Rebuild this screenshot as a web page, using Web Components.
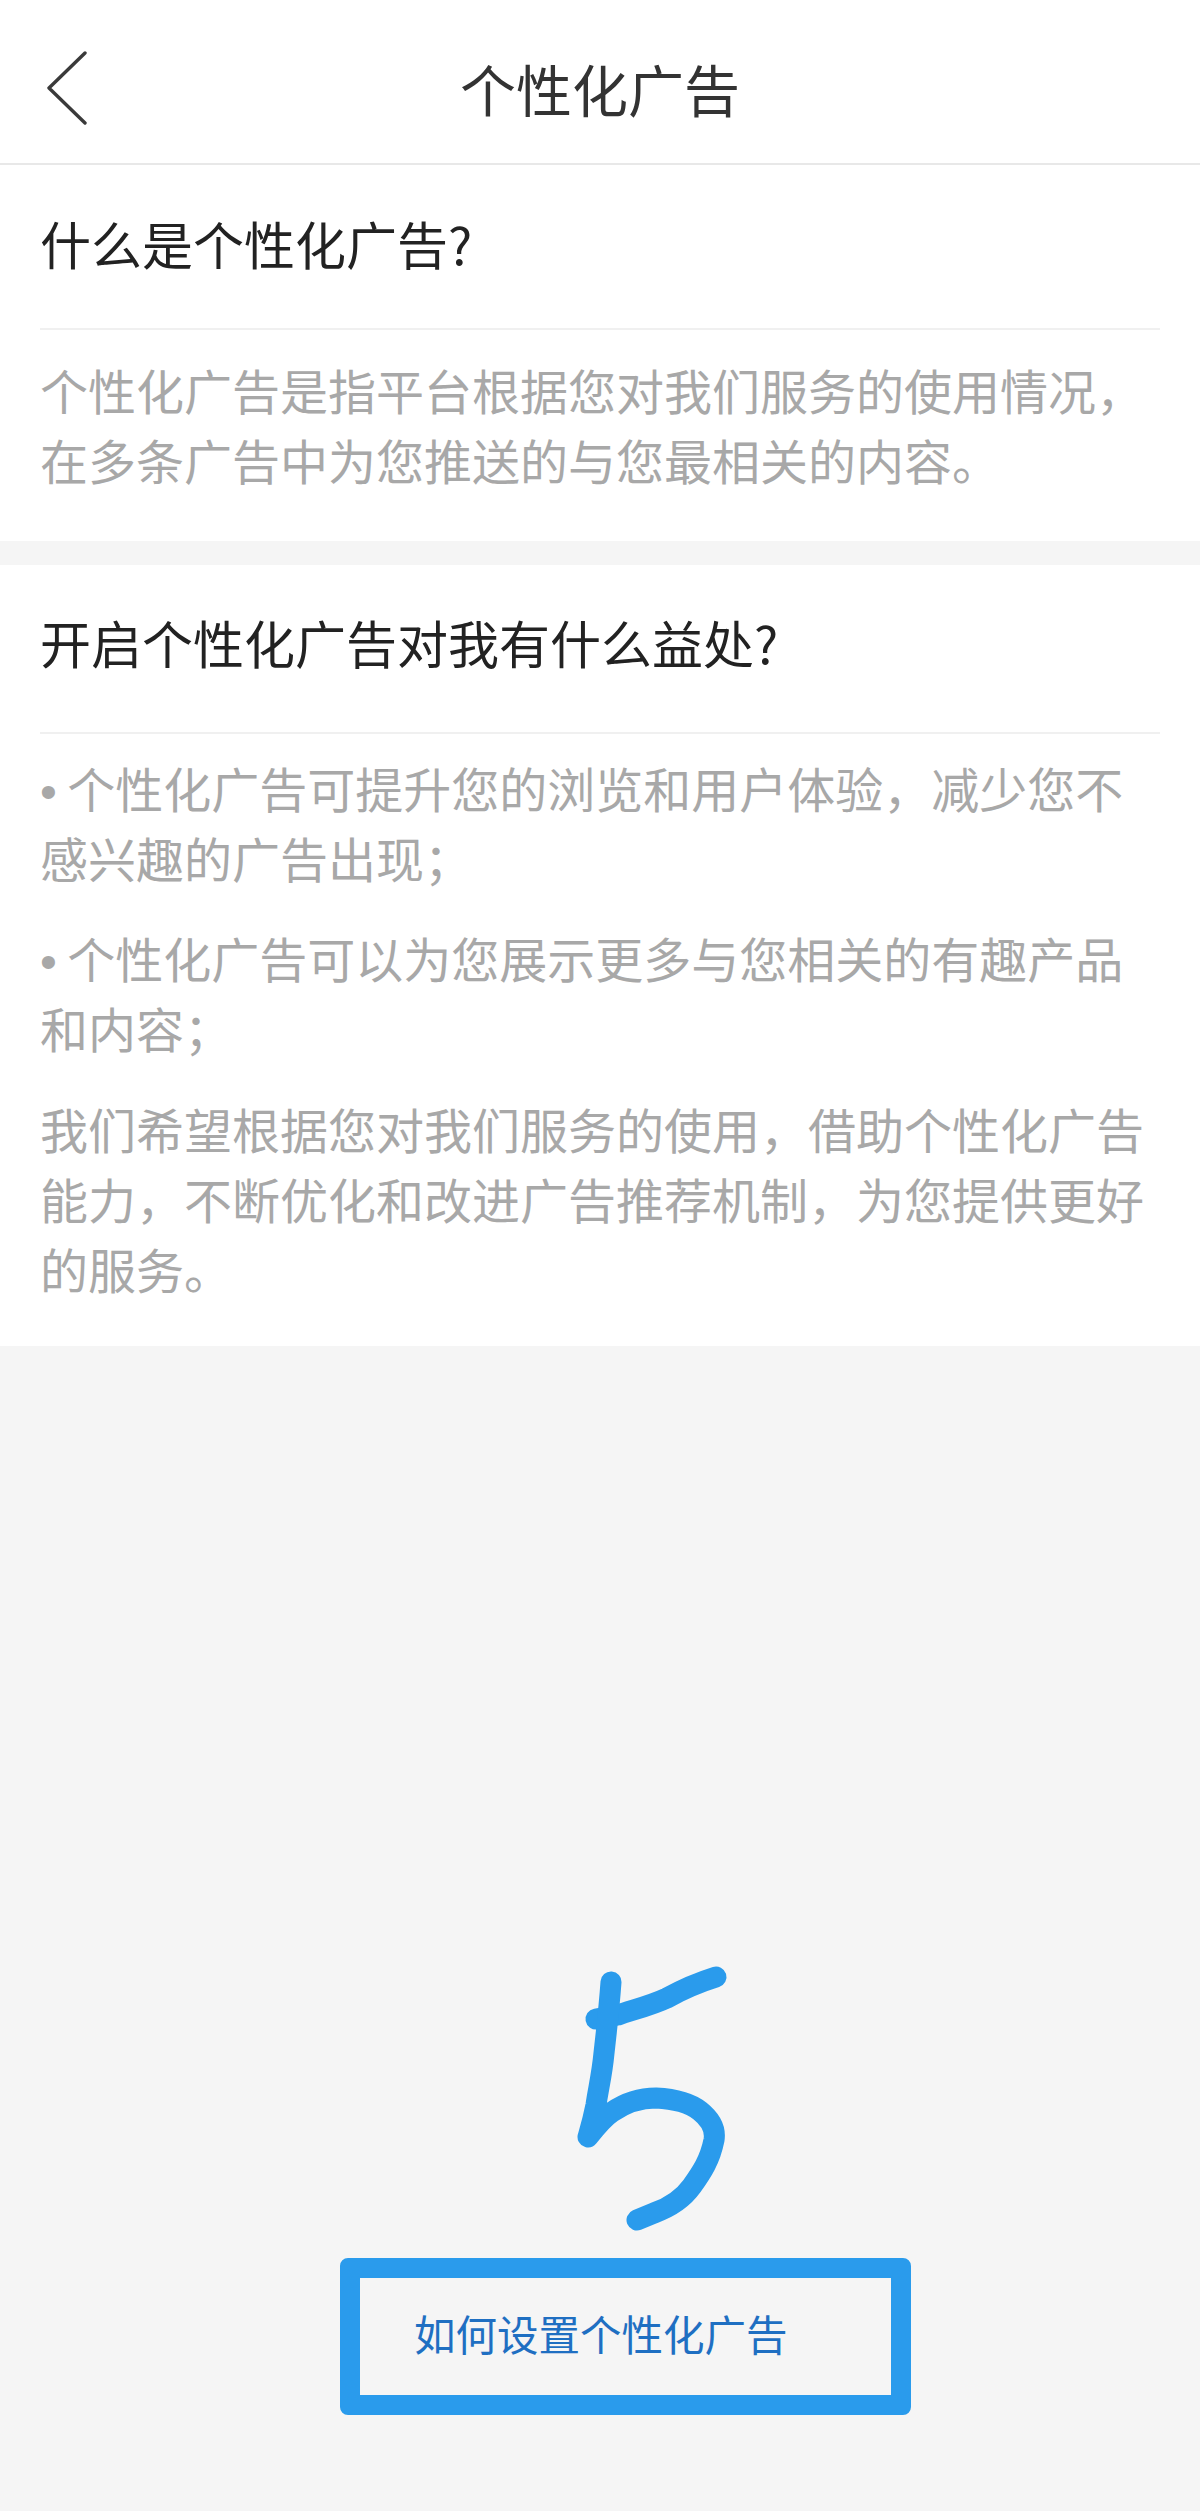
<!DOCTYPE html>
<html lang="zh">
<head>
<meta charset="utf-8">
<title>个性化广告</title>
<style>
  html, body { margin: 0; padding: 0; background: #f5f5f5; }
  body { font-family: "Noto Sans CJK SC", "Liberation Sans", sans-serif; }
  /* bullet comes from the latin font, the rest falls through to the CJK one */
  .item {
    font-family: "Liberation Sans", "Noto Sans CJK SC", sans-serif;
    word-spacing: -3px;
    padding-top: 4px;
    margin-bottom: 26px;
  }
</style>
</head>
<body>
<ad-page>
  <ad-header slot="top">个性化广告</ad-header>
  <ad-section slot="top" heading="什么是个性化广告?" head-height="163" head-bottom="6" body-top="24" body-bottom="47">
    <p>个性化广告是指平台根据您对我们服务的使用情况，在多条广告中为您推送的与您最相关的内容。</p>
  </ad-section>
  <ad-section slot="top" heading="开启个性化广告对我有什么益处?" head-height="167" head-bottom="12" body-top="19" body-bottom="43">
    <p class="item">• 个性化广告可提升您的浏览和用户体验，减少您不感兴趣的广告出现；</p>
    <p class="item">• 个性化广告可以为您展示更多与您相关的有趣产品和内容；</p>
    <p>我们希望根据您对我们服务的使用，借助个性化广告能力，不断优化和改进广告推荐机制，为您提供更好的服务。</p>
  </ad-section>
  <ad-link slot="bottom">如何设置个性化广告</ad-link>
</ad-page>

<script>
const pageTemplate = document.createElement('template');
pageTemplate.innerHTML = `
  <style>
    :host {
      display: flex;
      flex-direction: column;
      position: relative;
      height: 2511px;
      background: #f5f5f5;
      overflow: hidden;
    }
    .top { display: flex; flex-direction: column; gap: 24px; }
    .top ::slotted(ad-header) { margin-bottom: -24px; }
    .bottom {
      margin-top: auto;
      padding: 0 289px 96px 340px;
    }
    /* hand drawn annotation lying over the page */
    svg { position: absolute; left: 0; top: 0; pointer-events: none; }
    path { fill: none; stroke: #2a9bec; stroke-width: 21; stroke-linecap: round; stroke-linejoin: round; }
  </style>
  <div class="top"><slot name="top"></slot></div>
  <div class="bottom"><slot name="bottom"></slot></div>
  <svg width="1200" height="2511" viewBox="0 0 1200 2511">
    <path d="M716 1977C700 1982 685 1988 667 1998C650 2006 632 2010 618 2015L596 2019"/>
    <path d="M611 1982C609 2010 606 2035 604 2053C602 2075 598 2090 596 2105C593 2120 590 2130 588 2137C596 2127 603 2118 612 2112C625 2103 640 2098 656 2098C675 2099 690 2103 700 2111C710 2119 716 2128 714 2140C710 2160 702 2172 692 2186C682 2200 668 2208 654 2213L637 2220"/>
  </svg>
`;

class AdPage extends HTMLElement {
  constructor() {
    super();
    this.attachShadow({ mode: 'open' });
    this.shadowRoot.append(pageTemplate.content.cloneNode(true));
  }
}
customElements.define('ad-page', AdPage);

const headerTemplate = document.createElement('template');
headerTemplate.innerHTML = `
  <style>
    :host {
      display: flex;
      align-items: center;
      justify-content: center;
      position: relative;
      box-sizing: border-box;
      height: 165px;
      padding-top: 12px;
      background: #fff;
      border-bottom: 2px solid #e8e8e8;
      color: #333;
      font-size: 56px;
      line-height: 1;
    }
    .back { position: absolute; left: 47px; top: 51px; display: block; }
    .back path { fill: none; stroke: #3a3a3a; stroke-width: 3.4; stroke-linecap: round; stroke-linejoin: round; }
  </style>
  <svg class="back" width="40" height="74" viewBox="0 0 40 74">
    <path d="M38 2L2 37L38 72"/>
  </svg>
  <slot></slot>
`;

class AdHeader extends HTMLElement {
  constructor() {
    super();
    this.attachShadow({ mode: 'open' });
    this.shadowRoot.append(headerTemplate.content.cloneNode(true));
  }
}
customElements.define('ad-header', AdHeader);

const sectionTemplate = document.createElement('template');
sectionTemplate.innerHTML = `
  <style>
    :host {
      display: block;
      background: #fff;
      padding: 0 40px;
    }
    .head {
      display: flex;
      align-items: center;
      box-sizing: border-box;
      border-bottom: 2px solid #f0f0f0;
      color: #222;
      font-size: 51px;
      line-height: 1;
    }
    .body {
      color: #a8a8a8;
      font-size: 48px;
      line-height: 70px;
    }
    ::slotted(p) { margin: 0 0 30px; }
    ::slotted(p:last-child) { margin-bottom: 0; }
  </style>
  <div class="head"></div>
  <div class="body"><slot></slot></div>
`;

class AdSection extends HTMLElement {
  constructor() {
    super();
    this.attachShadow({ mode: 'open' });
    this.shadowRoot.append(sectionTemplate.content.cloneNode(true));
  }

  connectedCallback() {
    const head = this.shadowRoot.querySelector('.head');
    const body = this.shadowRoot.querySelector('.body');
    head.textContent = this.getAttribute('heading') || '';
    head.style.height = (Number(this.getAttribute('head-height')) + 2) + 'px';
    head.style.paddingBottom = this.getAttribute('head-bottom') + 'px';
    body.style.paddingTop = this.getAttribute('body-top') + 'px';
    body.style.paddingBottom = this.getAttribute('body-bottom') + 'px';
  }
}
customElements.define('ad-section', AdSection);

const linkTemplate = document.createElement('template');
linkTemplate.innerHTML = `
  <style>
    :host {
      display: flex;
      align-items: center;
      box-sizing: border-box;
      height: 157px;
      padding-left: 54px;
      padding-bottom: 5px;
      border: 20px solid #2a9bec;
      border-radius: 8px;
      color: #1f6fc2;
      font-size: 41.5px;
      line-height: 1;
    }
  </style>
  <slot></slot>
`;

class AdLink extends HTMLElement {
  constructor() {
    super();
    this.attachShadow({ mode: 'open' });
    this.shadowRoot.append(linkTemplate.content.cloneNode(true));
  }
}
customElements.define('ad-link', AdLink);
</script>
</body>
</html>
